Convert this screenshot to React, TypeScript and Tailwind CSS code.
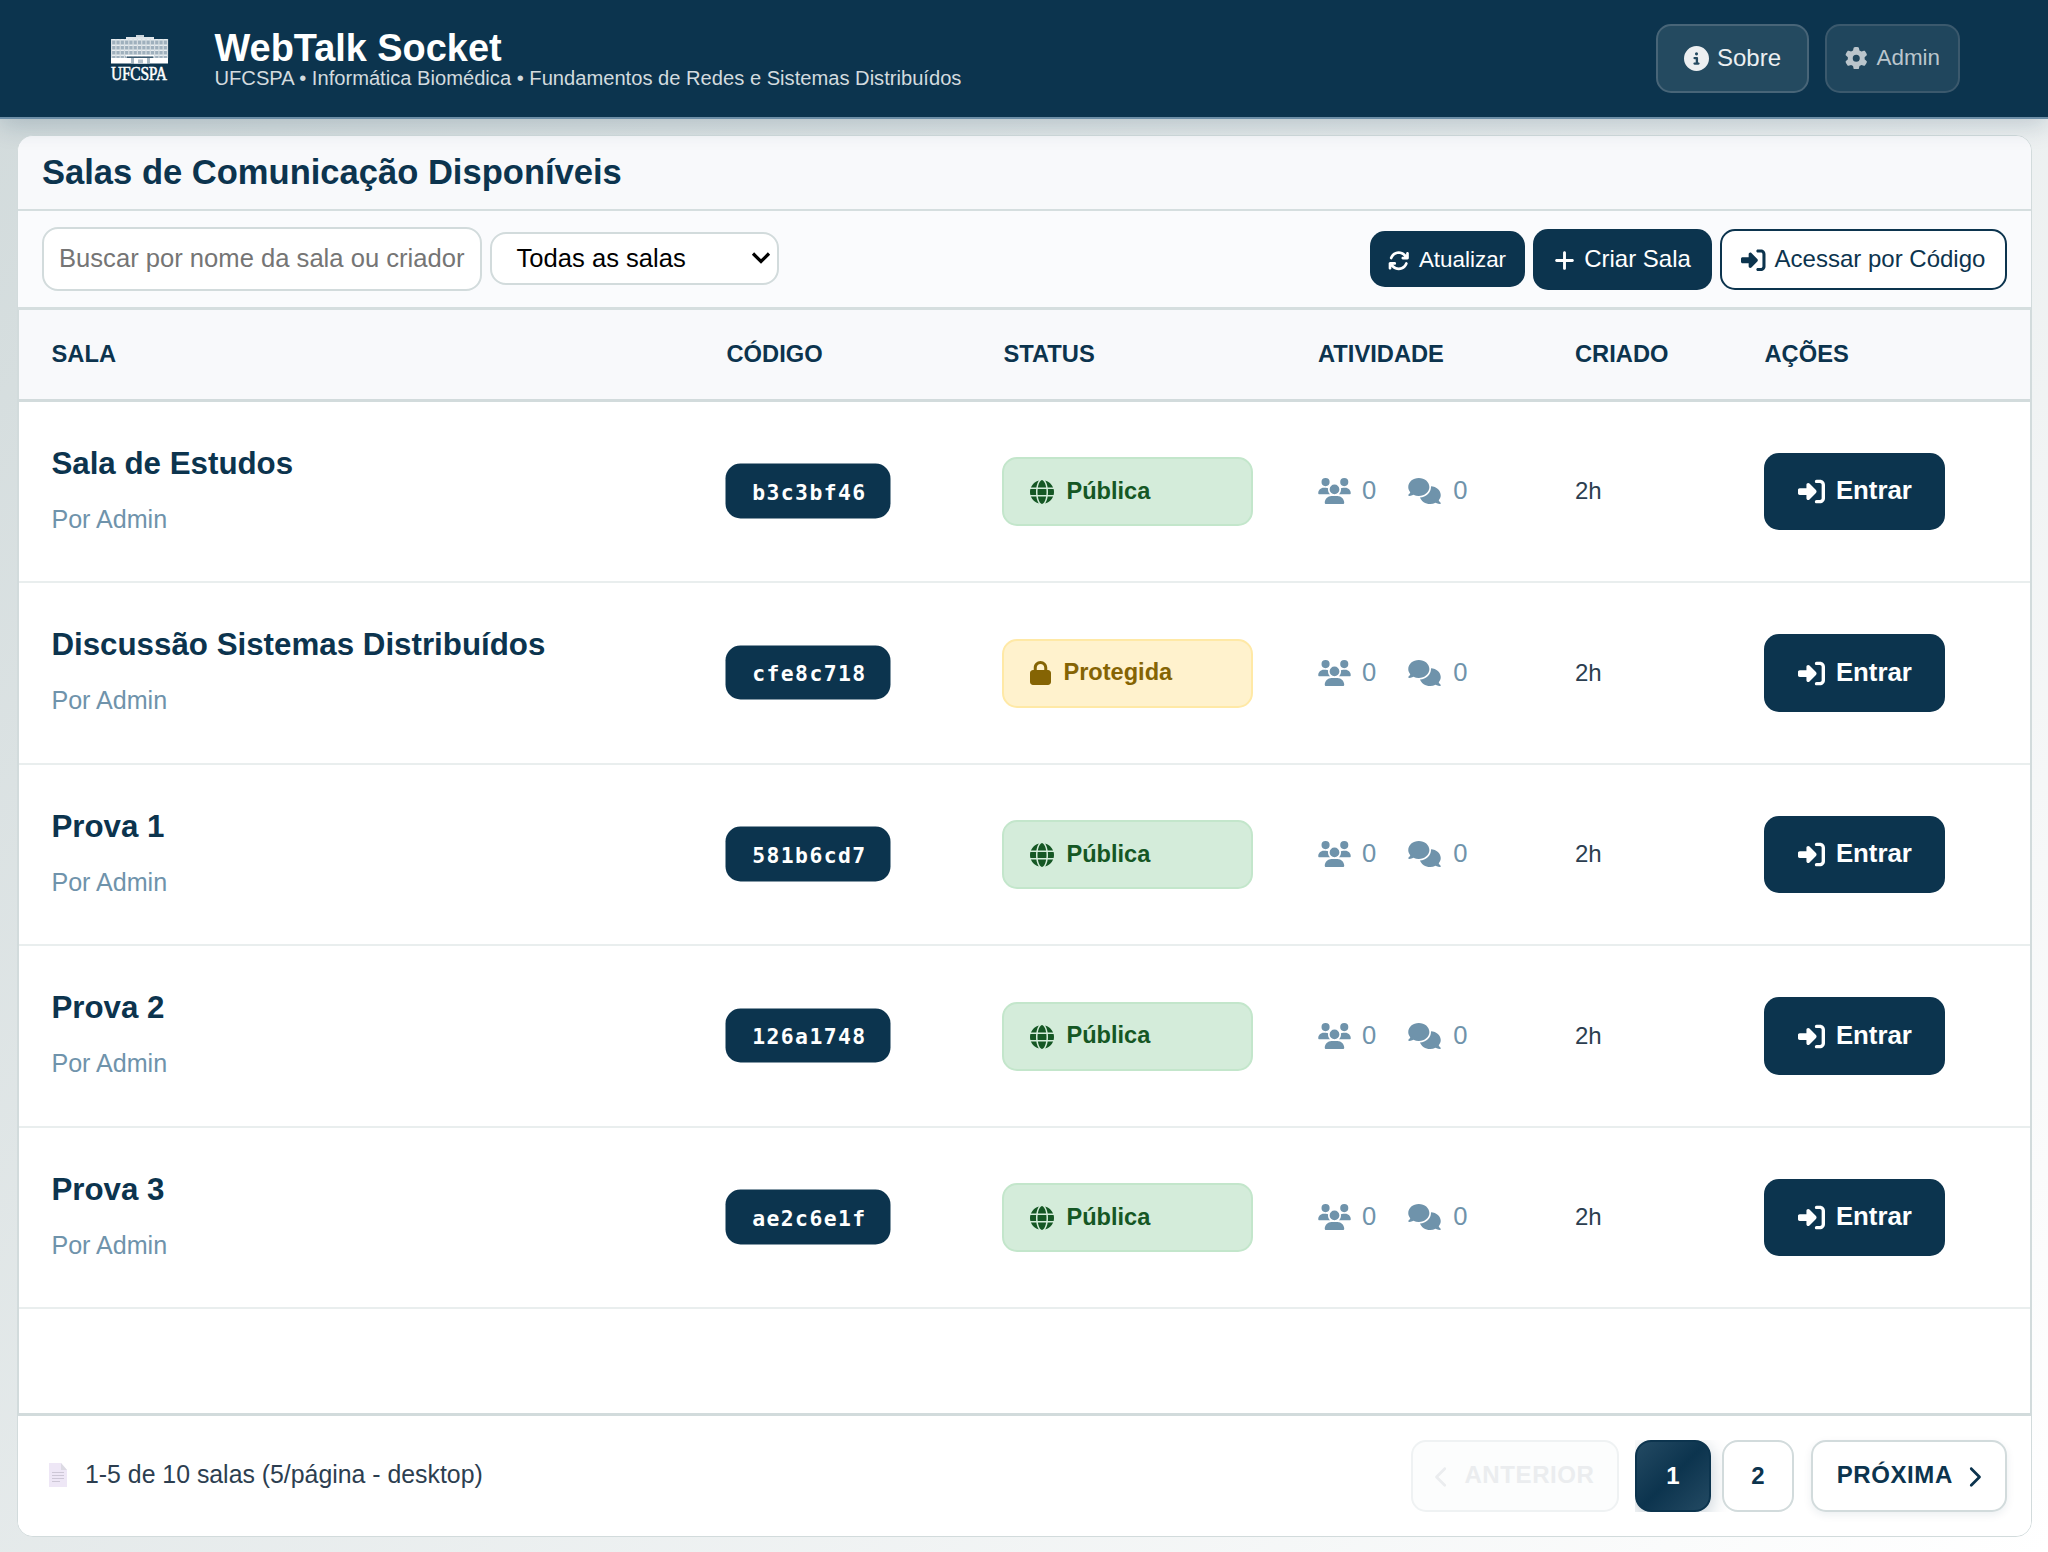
import React from 'react';
import {
  FaCircleInfo,
  FaGear,
  FaArrowsRotate,
  FaPlus,
  FaRightToBracket,
  FaLock,
  FaUsers,
  FaComments,
  FaChevronLeft,
  FaChevronRight,
  FaGlobe,
} from 'react-icons/fa6';

interface Room {
  name: string;
  code: string;
  locked?: boolean;
}

const rooms: Room[] = [
  { name: 'Sala de Estudos', code: 'b3c3bf46' },
  { name: 'Discussão Sistemas Distribuídos', code: 'cfe8c718', locked: true },
  { name: 'Prova 1', code: '581b6cd7' },
  { name: 'Prova 2', code: '126a1748' },
  { name: 'Prova 3', code: 'ae2c6e1f' },
];

const columns = 'grid grid-cols-[675px_277px_314.5px_257px_189.5px_1fr]';

function Logo() {
  const cols = Array.from({ length: 14 }, (_, i) => i);
  return (
    <div className="flex w-[58px] flex-col items-start">
      <svg viewBox="0 0 58 29" className="h-[29px] w-[58px]">
        <rect x="25" y="0" width="8" height="3" fill="#c9d3da" />
        <rect x="15" y="2" width="28" height="2" fill="#dfe5e9" />
        <rect x="0" y="4" width="57" height="19" fill="#9fb0bd" />
        {[4, 9.5, 14.5, 19.5].map((y) => (
          <rect key={y} x="0" y={y} width="57" height="1.5" fill="#e8edf0" />
        ))}
        {cols.map((c) => (
          <rect key={c} x={c * 4.3} y="4" width="1.2" height="19" fill="#d5dde2" />
        ))}
        <rect x="0" y="23" width="57" height="5.5" fill="#fff" />
        <rect x="15" y="20" width="28" height="1.5" fill="#fff" />
        <rect x="16" y="21.5" width="26" height="1.5" fill="#3c5b70" />
        <rect x="20" y="23" width="19" height="5.5" fill="#a9b9c4" />
        <rect x="23" y="23" width="13" height="5.5" fill="#fff" />
        <rect x="27" y="24.5" width="5" height="4" fill="#b5c2cc" />
      </svg>
      <div className="mt-px h-[17px] origin-left scale-x-[0.84] whitespace-nowrap font-['Liberation_Serif',serif] text-[18.5px] leading-[18px] tracking-[-0.3px] text-white [-webkit-text-stroke:0.5px_#fff]">
        UFCSPA
      </div>
    </div>
  );
}

function Header() {
  return (
    <header className="relative z-10 flex h-[119px] items-center justify-between border-b-2 border-[#6e8fa7] bg-[#0c344e] pb-px pl-[111px] pr-[88px] shadow-[0_6px_24px_rgba(12,52,78,0.2)]">
      <div className="flex items-center">
        <Logo />
        <div className="ml-[45.5px] pt-[3px]">
          <h1 className="h-[34px] whitespace-nowrap text-[37.9px] font-bold leading-[34px] text-white">WebTalk Socket</h1>
          <p className="h-[24px] whitespace-nowrap text-[20.15px] leading-[26px] text-[#d3dbdf]">
            UFCSPA • Informática Biomédica • Fundamentos de Redes e Sistemas Distribuídos
          </p>
        </div>
      </div>
      <div className="flex gap-[16px]">
        <button className="flex h-[69px] w-[153px] items-center justify-center gap-[8px] rounded-[15px] border-2 border-[#486578] bg-[#244a60] text-[24px] text-[#eceff1]">
          <FaCircleInfo className="size-[25px]" />
          Sobre
        </button>
        <button className="flex h-[69px] w-[135px] items-center justify-center gap-[9px] rounded-[15px] border-2 border-[#3b596d] bg-[#20465d] text-[22.4px] text-[#bac5cc]">
          <FaGear className="size-[22.5px]" />
          Admin
        </button>
      </div>
    </header>
  );
}

function Toolbar() {
  return (
    <div className="flex h-[99px] items-center justify-between border-b-[3px] border-[#d5dedf] bg-[#fafbfd] pl-[23.5px] pr-[24.5px]">
      <div className="flex items-center gap-[8px]">
        <input
          placeholder="Buscar por nome da sala ou criador"
          className="h-[64px] w-[440px] rounded-[16px] border-2 border-[#d2dbdc] bg-white pb-px pl-[15.5px] text-[25.6px] text-black placeholder:text-[#757575]"
        />
        <div className="flex h-[53px] w-[289px] items-center justify-between rounded-[16px] border-2 border-[#d2dbdc] bg-white pb-px pl-[25px] pr-[6px] text-[25.6px] text-black">
          <span className="whitespace-nowrap">Todas as salas</span>
          <svg viewBox="0 0 20 14" className="h-[14px] w-[20px]" fill="none" stroke="#000" strokeWidth="3.2">
            <path d="M2 2.5 L10 10.5 L18 2.5" />
          </svg>
        </div>
      </div>
      <div className="flex items-center gap-[8px] pt-px">
        <button className="flex h-[56px] w-[155.5px] items-center justify-center gap-[9px] rounded-[15px] bg-[#0c344e] text-[22.4px] text-white">
          <FaArrowsRotate className="mt-[3px] size-[21.5px]" />
          Atualizar
        </button>
        <button className="flex h-[61px] w-[179px] items-center justify-center gap-[8px] rounded-[15px] bg-[#0c344e] pr-px text-[24px] text-white">
          <FaPlus className="mt-[2px] size-[23px]" />
          Criar Sala
        </button>
        <button className="flex h-[61px] w-[286.5px] items-center justify-center gap-[9px] rounded-[15px] border-2 border-[#0c344e] bg-white text-[24px] text-[#0c344e]">
          <FaRightToBracket className="mt-[2px] size-[24.5px]" />
          Acessar por Código
        </button>
      </div>
    </div>
  );
}

function TableHead() {
  return (
    <div
      className={`${columns} h-[92px] items-center border-b-[3px] border-[#d2dbdc] bg-[#f8f9fb] pl-[32.5px] pt-px text-[23.7px] font-bold text-[#0c344e]`}
    >
      <span>SALA</span>
      <span>CÓDIGO</span>
      <span>STATUS</span>
      <span>ATIVIDADE</span>
      <span>CRIADO</span>
      <span>AÇÕES</span>
    </div>
  );
}

function RoomRow({ room }: { room: Room }) {
  return (
    <div className={`${columns} h-[181.5px] items-center border-b-2 border-[#e9eeee] pl-[32.4px]`}>
      <div>
        <div className="h-[56px] whitespace-nowrap text-[31.3px] font-bold leading-[55.6px] text-[#0c344e]">{room.name}</div>
        <div className="h-[56px] text-[25.1px] leading-[55px] text-[#6f93ab]">Por Admin</div>
      </div>
      <div>
        <span className="flex h-[54.4px] w-[165px] -translate-x-[0.5px] -translate-y-[0.5px] items-center justify-center rounded-[15px] bg-[#0c344e] pl-[2px] pt-[2px] font-['DejaVu_Sans_Mono',monospace] text-[21.4px] font-bold tracking-[1.4px] text-white">
          {room.code}
        </span>
      </div>
      {room.locked ? (
        <span className="-ml-px flex h-[69px] w-[251px] items-center gap-[12px] rounded-[15px] border-2 border-[#ffe9a6] bg-[#fff2cd] pl-[26px] text-[23.6px] font-bold text-[#856404]">
          <FaLock className="h-[24px] w-[21px]" />
          Protegida
        </span>
      ) : (
        <span className="-ml-px flex h-[69px] w-[251px] items-center gap-[12px] rounded-[15px] border-2 border-[#c3e6cb] bg-[#d4ecda] pl-[26px] text-[23.6px] font-bold text-[#155724]">
          <FaGlobe className="mt-px size-[24px]" />
          Pública
        </span>
      )}
      <div className="flex items-center pb-px text-[25.6px] leading-[30px] text-[#6f93ab]">
        <FaUsers className="h-[26px] w-[33px]" />
        <span className="ml-[11px] pb-[2px]">0</span>
        <FaComments className="ml-[32px] h-[26px] w-[33px]" />
        <span className="ml-[12px] pb-[2px]">0</span>
      </div>
      <span className="pb-px text-[24px] text-[#2c3e50]">2h</span>
      <button className="flex h-[77.6px] w-[181px] items-center justify-center gap-[11px] rounded-[15px] bg-[#0c344e] pb-[2px] text-[25.8px] font-bold text-white">
        <FaRightToBracket className="mt-[2px] size-[27px]" />
        Entrar
      </button>
    </div>
  );
}

function PageIcon() {
  return (
    <svg viewBox="0 0 18 24" className="h-[24px] w-[18px]">
      <path d="M0 0H12L18 7V24H0Z" fill="#eee7f6" />
      <path d="M12 0L18 7H12Z" fill="#dcdae3" />
      <path d="M3 9.5H15M3 12.5H15M3 15.5H15M3 18.5H11" stroke="#cdc7d6" strokeWidth="1.2" />
    </svg>
  );
}

function Footer() {
  return (
    <div className="flex h-[120px] items-center justify-between bg-white pl-[31px] pr-[24.5px]">
      <div className="flex items-center gap-[18px] pb-[2px] text-[24.85px] text-[#2c3e50]">
        <PageIcon />
        <span className="whitespace-nowrap">1-5 de 10 salas (5/página - desktop)</span>
      </div>
      <div className="flex items-center text-[24px] font-bold text-[#0c344e]">
        <button className="flex h-[72px] w-[208px] items-center justify-center gap-[15px] rounded-[15px] border-2 border-[#eff2f3] bg-[#fcfdfd] pb-[2px] tracking-[0.6px] text-[#ebedef]">
          <FaChevronLeft className="mt-[4px] h-[22px] w-[14px]" />
          ANTERIOR
        </button>
        <div className="ml-[16px] flex h-[72px] gap-[11px] overflow-hidden">
          <span className="flex w-[76px] items-center justify-center rounded-[16px] border-2 border-[#0c344e] bg-linear-135 from-[#234a63] via-[#0c344e] to-[#234a63] text-white shadow-[0_6px_19px_rgba(12,52,78,0.25)]">
            1
          </span>
          <span className="relative flex w-[72px] items-center justify-center rounded-[16px] border-2 border-[#d2dbdc] bg-white pb-px">
            2
          </span>
        </div>
        <button className="ml-[17px] flex h-[72px] w-[195.5px] items-center justify-center gap-[14px] rounded-[15px] border-2 border-[#d2dbdc] bg-white pb-[2px] tracking-[0.6px] shadow-[0_3px_8px_rgba(12,52,78,0.08)]">
          PRÓXIMA
          <FaChevronRight className="mt-[4px] h-[22px] w-[14px]" />
        </button>
      </div>
    </div>
  );
}

export default function App() {
  return (
    <div className="flex h-[1552px] w-[2048px] flex-col overflow-hidden bg-linear-135 from-[#d1dadb] to-[#ffffff] font-['Liberation_Sans',Arial,sans-serif]">
      <Header />
      <main className="ml-[17px] mt-[16px] flex h-[1402px] w-[2015px] flex-col overflow-hidden rounded-[16px] border border-[#d2dbdc] bg-white">
        <div className="flex h-[75px] items-center border-b-2 border-[#d5dedf] bg-[#f8f9fb] pl-[24px]">
          <h2 className="whitespace-nowrap text-[34.55px] font-bold leading-none text-[#0c344e]">
            Salas de Comunicação Disponíveis
          </h2>
        </div>
        <Toolbar />
        <div className="flex h-[1107px] flex-col border-x border-b-[3px] border-[#d2dbdc] bg-white">
          <TableHead />
          {rooms.map((room) => (
            <RoomRow key={room.code} room={room} />
          ))}
        </div>
        <Footer />
      </main>
    </div>
  );
}
